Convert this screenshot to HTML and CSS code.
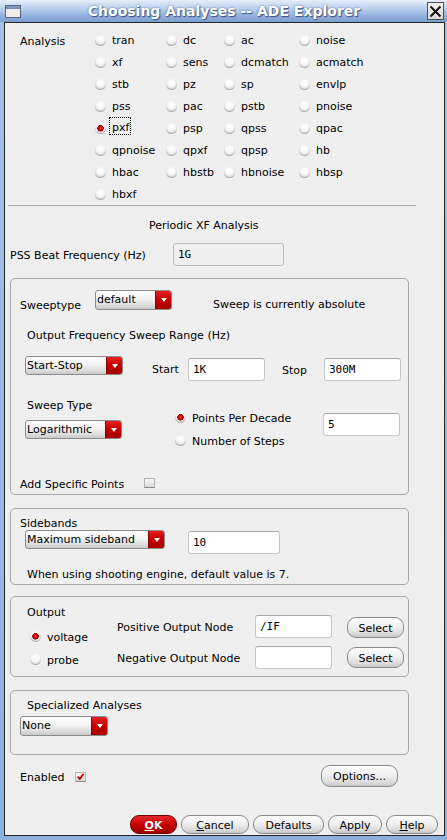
FILE: index.html
```html
<!DOCTYPE html>
<html>
<head>
<meta charset="utf-8">
<title>Choosing Analyses -- ADE Explorer</title>
<link rel="stylesheet" href="styles.css">
</head>
<body>
<div class="window">
  <div class="titlebar">
    <div class="tb-icon"><div class="tb-icon-bar"></div></div>
    <div class="tb-title">Choosing Analyses -- ADE Explorer</div>
    <div class="tb-close"><svg width="13" height="13" viewBox="0 0 13 13"><path d="M1.5 1.5 L11.5 11.5 M11.5 1.5 L1.5 11.5" stroke="#111" stroke-width="2" fill="none"/></svg></div>
  </div>
  <div class="body">
    <div class="client">
      <div class="analysis">
        <div class="an-label">Analysis</div>
        <div class="an-grid">
          <div class="opt"><span class="radio"></span><span>tran</span></div>
          <div class="opt"><span class="radio"></span><span>dc</span></div>
          <div class="opt"><span class="radio"></span><span>ac</span></div>
          <div class="opt"><span class="radio"></span><span>noise</span></div>
          <div class="opt"><span class="radio"></span><span>xf</span></div>
          <div class="opt"><span class="radio"></span><span>sens</span></div>
          <div class="opt"><span class="radio"></span><span>dcmatch</span></div>
          <div class="opt"><span class="radio"></span><span>acmatch</span></div>
          <div class="opt"><span class="radio"></span><span>stb</span></div>
          <div class="opt"><span class="radio"></span><span>pz</span></div>
          <div class="opt"><span class="radio"></span><span>sp</span></div>
          <div class="opt"><span class="radio"></span><span>envlp</span></div>
          <div class="opt"><span class="radio"></span><span>pss</span></div>
          <div class="opt"><span class="radio"></span><span>pac</span></div>
          <div class="opt"><span class="radio"></span><span>pstb</span></div>
          <div class="opt"><span class="radio"></span><span>pnoise</span></div>
          <div class="opt"><span class="radio on"></span><span class="focus">pxf</span></div>
          <div class="opt"><span class="radio"></span><span>psp</span></div>
          <div class="opt"><span class="radio"></span><span>qpss</span></div>
          <div class="opt"><span class="radio"></span><span>qpac</span></div>
          <div class="opt"><span class="radio"></span><span>qpnoise</span></div>
          <div class="opt"><span class="radio"></span><span>qpxf</span></div>
          <div class="opt"><span class="radio"></span><span>qpsp</span></div>
          <div class="opt"><span class="radio"></span><span>hb</span></div>
          <div class="opt"><span class="radio"></span><span>hbac</span></div>
          <div class="opt"><span class="radio"></span><span>hbstb</span></div>
          <div class="opt"><span class="radio"></span><span>hbnoise</span></div>
          <div class="opt"><span class="radio"></span><span>hbsp</span></div>
          <div class="opt"><span class="radio"></span><span>hbxf</span></div>
        </div>
      </div>
      <div class="sep"></div>
      <div class="heading">Periodic XF Analysis</div>
      <div class="pss-row">
        <span class="pss-label">PSS Beat Frequency (Hz)</span>
        <span class="input disabled w111">1G</span>
      </div>

      <div class="group g-sweep">
        <div class="row-a">
          <span class="lbl sweeptype">Sweeptype</span>
          <span class="combo w77"><span class="combo-text">default</span><span class="combo-btn"><i class="tri"></i></span></span>
          <span class="lbl abs">Sweep is currently absolute</span>
        </div>
        <div class="sub-title range-title">Output Frequency Sweep Range (Hz)</div>
        <div class="row-c">
          <span class="combo w98 h19"><span class="combo-text">Start-Stop</span><span class="combo-btn"><i class="tri"></i></span></span>
          <span class="lbl start-lbl">Start</span>
          <span class="input w76 mt2">1K</span>
          <span class="lbl stop-lbl">Stop</span>
          <span class="input w76 mt2">300M</span>
        </div>
        <div class="row-d">
          <div class="col-left">
            <div class="st-title">Sweep Type</div>
            <span class="combo w97 h19 st-combo"><span class="combo-text">Logarithmic</span><span class="combo-btn"><i class="tri"></i></span></span>
          </div>
          <div class="col-mid">
            <div class="ropt"><span class="radio on"></span><span class="rtext">Points Per Decade</span></div>
            <div class="ropt"><span class="radio"></span><span class="rtext">Number of Steps</span></div>
          </div>
          <div class="col-right">
            <span class="input w76">5</span>
          </div>
        </div>
        <div class="row-f">
          <span class="asp-label">Add Specific Points</span>
          <span class="check"></span>
        </div>
      </div>

      <div class="group g-side">
        <div class="side-title">Sidebands</div>
        <div class="side-row">
          <span class="combo w140 h19"><span class="combo-text">Maximum sideband</span><span class="combo-btn"><i class="tri"></i></span></span>
          <span class="input w91 side-input">10</span>
        </div>
        <div class="sub-title note">When using shooting engine, default value is 7.</div>
      </div>

      <div class="group g-out">
        <div class="out-left">
          <div class="out-title">Output</div>
          <div class="ropt out-opt"><span class="radio on"></span><span class="rtext">voltage</span></div>
          <div class="ropt out-opt"><span class="radio"></span><span class="rtext">probe</span></div>
        </div>
        <div class="out-right">
          <div class="node-row">
            <span class="node-label">Positive Output Node</span>
            <span class="input w76">/IF</span>
            <span class="btn select mt2">Select</span>
          </div>
          <div class="node-row second">
            <span class="node-label">Negative Output Node</span>
            <span class="input w76"></span>
            <span class="btn select mt1">Select</span>
          </div>
        </div>
      </div>

      <div class="group g-spec">
        <div class="sub-title spec-title">Specialized Analyses</div>
        <span class="combo w88 spec-combo"><span class="combo-text">None</span><span class="combo-btn"><i class="tri"></i></span></span>
      </div>

      <div class="footer-row">
        <span class="en-label">Enabled</span>
        <span class="check checked"><svg width="11" height="10" viewBox="0 0 11 10"><path d="M2 4.5 L4.6 7.6 L9.2 1.2" stroke="#d40000" stroke-width="2.2" fill="none"/></svg></span>
        <span class="btn options">Options...</span>
      </div>

      <div class="buttons">
        <span class="btn ok"><u>O</u>K</span>
        <span class="btn b-cancel"><u>C</u>ancel</span>
        <span class="btn b-defaults">Defaults</span>
        <span class="btn b-apply">Apply</span>
        <span class="btn b-help"><u>H</u>elp</span>
      </div>
    </div>
  </div>
</div>
</body>
</html>
```

FILE: styles.css
```css
* { box-sizing: border-box; }

html, body {
  margin: 0;
  padding: 0;
  background: #efefef;
}

body {
  font-family: "DejaVu Sans", "Liberation Sans", sans-serif;
  font-size: 11px;
  color: #000;
}

.window {
  width: 447px;
  height: 840px;
  display: flex;
  flex-direction: column;
}

/* ---------- title bar ---------- */
.titlebar {
  height: 22px;
  flex: none;
  display: flex;
  align-items: center;
  background: linear-gradient(#e6eef9 0%, #bfd3ee 35%, #94b3de 70%, #7c9fd2 100%);
}

.tb-icon {
  width: 16px;
  height: 13px;
  margin-left: 5px;
  border: 1px solid #55657d;
  background: #eeeeee;
  flex: none;
  align-self: flex-start;
  margin-top: 5px;
}

.tb-icon-bar {
  height: 3px;
  background: linear-gradient(#8aa3c8, #6d88b2);
}

.tb-title {
  flex: 1;
  text-align: center;
  color: #fff;
  font-weight: bold;
  font-size: 14px;
  line-height: 22px;
  text-shadow: 1px 1px 1px #3a5680, 0 0 2px #4a6a98;
}

.tb-close {
  width: 17px;
  height: 18px;
  margin-right: 3px;
  flex: none;
  border: 1px solid #4f4f4f;
  background: linear-gradient(#f4f4f4, #dadada);
  display: flex;
  align-items: center;
  justify-content: center;
}

/* ---------- window body ---------- */
.body {
  flex: 1;
  padding: 0 2px 4px 4px;
  background: linear-gradient(to bottom, #a7c0e4, #8fb0dc);
  display: flex;
}

.client {
  flex: 1;
  border: 1px solid #262626;
  background: #efefef;
  display: flex;
  flex-direction: column;
}

/* ---------- analysis radios ---------- */
.analysis {
  display: flex;
  padding: 6px 0 0 15px;
}

.an-label {
  width: 75px;
  line-height: 22px;
  padding-top: 2px;
  flex: none;
}

.an-grid {
  display: grid;
  grid-template-columns: 71px 58px 75px 80px;
  grid-auto-rows: 22px;
}

.opt, .ropt {
  display: flex;
  align-items: center;
  white-space: nowrap;
}

.rtext { padding-top: 2px; }

.radio {
  width: 11px;
  height: 11px;
  border-radius: 50%;
  margin-right: 6px;
  flex: none;
  background: radial-gradient(circle at 50% 30%, #ffffff 0%, #f7f7f7 45%, #d6d6d6 75%, #a9a9a9 100%);
  box-shadow: inset 0 -1px 1px rgba(0,0,0,0.18);
}

.radio.on {
  background:
    radial-gradient(circle at 50% 48%, #ff4a4a 0%, #dd0000 22%, #9a0000 38%, rgba(150,0,0,0) 44%),
    radial-gradient(circle at 50% 30%, #ffffff 0%, #f7f7f7 45%, #d6d6d6 75%, #a9a9a9 100%);
}

.focus {
  position: relative;
  line-height: 22px;
}

.focus::after {
  content: "";
  position: absolute;
  left: -3px;
  right: -2px;
  top: 0;
  height: 16px;
  border: 1px dotted #000;
}

.sep {
  height: 1px;
  background: #a8a8a8;
  margin: 0 28px 0 3px;
  flex: none;
}

.heading {
  margin-top: 12px;
  line-height: 16px;
  padding-left: 144px;
}

.pss-row {
  display: flex;
  align-items: center;
  margin-top: 9px;
  padding-left: 5px;
}

.pss-label {
  width: 163px;
  flex: none;
  padding-top: 1px;
}

/* ---------- inputs ---------- */
.input {
  display: block;
  flex: none;
  height: 23px;
  border: 1px solid #c6c6c6;
  border-top-color: #a9a9a9;
  border-radius: 3px;
  background: #fff;
  font-family: "DejaVu Sans Mono", "Liberation Mono", monospace;
  font-size: 11px;
  line-height: 22px;
  padding-left: 4px;
}

.input.disabled {
  background: #efefef;
  border-color: #bcbcbc;
}

.w111 { width: 111px; }
.w76 { width: 77px; }
.w91 { width: 92px; }
.mt1 { margin-top: 1px; }
.mt2 { margin-top: 2px; }

/* ---------- combo boxes ---------- */
.combo {
  display: flex;
  flex: none;
  height: 20px;
  border: 1px solid #8c8c8c;
  border-radius: 3px;
  background: linear-gradient(#ffffff 0%, #f2f2f2 45%, #dcdcdc 80%, #c9c9c9 100%);
  overflow: hidden;
}

.combo.h19 { height: 19px; }

.combo-text {
  flex: 1;
  line-height: 18px;
  padding-left: 1px;
  white-space: nowrap;
}

.combo-btn {
  width: 16px;
  flex: none;
  background: linear-gradient(#e52222 0%, #c80000 45%, #a30000 100%);
  border-left: 1px solid #8a0000;
  display: flex;
  align-items: center;
  justify-content: center;
}

.tri {
  width: 0;
  height: 0;
  border-left: 3px solid transparent;
  border-right: 3px solid transparent;
  border-top: 4px solid #fff;
}

.w77 { width: 77px; }
.w98 { width: 98px; }
.w97 { width: 97px; }
.w140 { width: 140px; }
.w88 { width: 88px; }

/* ---------- groups ---------- */
.group {
  flex: none;
  margin-left: 5px;
  width: 399px;
  border: 1px solid #a9a9a9;
  border-radius: 5px;
}

.g-sweep {
  margin-top: 12px;
  height: 217px;
  padding-top: 11px;
}

.row-a {
  display: flex;
  align-items: flex-start;
  height: 20px;
  padding-left: 9px;
}

.lbl { line-height: 14px; white-space: nowrap; flex: none; }
.sweeptype { width: 75px; margin-top: 9px; }
.abs { margin-left: 41px; margin-top: 8px; }

.sub-title {
  line-height: 16px;
  padding-left: 16px;
}

.range-title { margin-top: 18px; }

.row-c {
  display: flex;
  align-items: flex-start;
  margin-top: 12px;
  padding-left: 14px;
}

.start-lbl { margin-left: 29px; width: 36px; margin-top: 7px; }
.stop-lbl { margin-left: 17px; width: 42px; margin-top: 8px; }

.row-d {
  display: flex;
  align-items: flex-start;
  margin-top: 15px;
  padding-left: 14px;
}

.col-left { width: 150px; flex: none; }
.st-title { line-height: 16px; padding-left: 2px; padding-top: 2px; }
.st-combo { margin-top: 6px; }

.col-mid { width: 148px; flex: none; margin-top: 10px; }
.col-mid .ropt { height: 23px; }

.col-right { margin-top: 17px; }

.row-f {
  display: flex;
  align-items: center;
  height: 16px;
  margin-top: 23px;
  padding-left: 9px;
}

.asp-label { width: 124px; flex: none; padding-top: 2px; }

.check {
  width: 11px;
  height: 10px;
  flex: none;
  border: 1px solid #b4b4b4;
  border-bottom-color: #8a8a8a;
  background: linear-gradient(#fafafa, #dcdcdc);
  display: flex;
  align-items: center;
  justify-content: center;
}

.check svg { display: block; }

/* sidebands */
.g-side {
  margin-top: 13px;
  height: 77px;
  padding-top: 8px;
}

.side-title {
  line-height: 13px;
  padding-left: 9px;
}

.side-row {
  display: flex;
  align-items: flex-start;
  padding-left: 14px;
}

.side-input { margin-left: 23px; margin-top: 1px; }

.note { margin-top: 13px; }

/* output */
.g-out {
  margin-top: 11px;
  height: 81px;
  display: flex;
  align-items: flex-start;
}

.out-left {
  width: 106px;
  flex: none;
  padding-top: 8px;
}

.out-title { line-height: 16px; padding-left: 16px; }

.out-opt { height: 23px; padding-left: 19px; }
.out-title + .out-opt { margin-top: 4px; }

.out-right { margin-top: 18px; }

.node-row {
  display: flex;
  align-items: flex-start;
}

.node-row.second { margin-top: 7px; }

.node-label {
  width: 138px;
  flex: none;
  line-height: 23px;
  padding-top: 1px;
}

/* buttons */
.btn {
  display: flex;
  align-items: center;
  justify-content: center;
  flex: none;
  border: 1px solid #8a8a8a;
  border-radius: 9px;
  background: linear-gradient(#fdfdfd 0%, #f0f0f0 45%, #dcdcdc 80%, #c8c8c8 100%);
  white-space: nowrap;
  padding-top: 1px;
}

.select {
  width: 57px;
  height: 21px;
  margin-left: 15px;
}

/* specialized */
.g-spec {
  margin-top: 13px;
  height: 65px;
  padding-top: 7px;
}

.spec-combo { margin-top: 2px; margin-left: 9px; }

/* footer */
.footer-row {
  display: flex;
  align-items: center;
  height: 22px;
  margin-top: 10px;
  padding-left: 15px;
}

.en-label { width: 55px; flex: none; padding-top: 3px; }
.footer-row .check { margin-top: 2px; }

.options {
  width: 77px;
  height: 22px;
  margin-left: 235px;
}

.buttons {
  display: flex;
  justify-content: flex-end;
  gap: 4px;
  margin-top: 28px;
  padding-right: 6px;
}

.buttons .btn { height: 19px; }

.ok {
  width: 47px;
  color: #fff;
  font-weight: bold;
  border-color: #6d0000;
  background: linear-gradient(#e42a2a 0%, #c80000 50%, #a00000 100%);
}

.b-cancel { width: 68px; }
.b-defaults { width: 71px; }
.b-apply { width: 54px; }
.b-help { width: 52px; }
```
